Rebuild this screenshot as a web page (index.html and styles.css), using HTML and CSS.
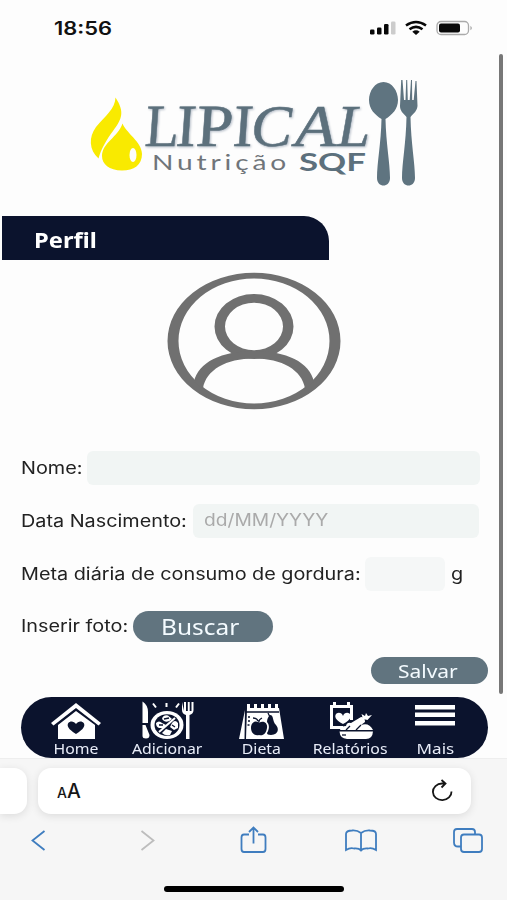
FILE: index.html
```html
<!DOCTYPE html>
<html lang="pt-BR">
<head>
<meta charset="utf-8">
<title>Lipical - Perfil</title>
<link rel="stylesheet" href="styles.css">
</head>
<body>
<div class="phone">
  <header class="status">
    <svg class="clock" viewBox="0 0 60 20"><text x="0" y="17" textLength="58" lengthAdjust="spacingAndGlyphs">18:56</text></svg>
    <svg class="signals" viewBox="0 0 104 16">
      <rect x="1" y="9.5" width="4.5" height="5" rx="1.3"/><rect x="8" y="7.5" width="4.5" height="7" rx="1.3"/><rect x="15" y="4" width="4.5" height="10.500" rx="1.300"/><rect class="dim" x="22" y="1.500" width="4.500" height="13" rx="1.300"/>
      <g class="wifi"><path d="M37 5.500Q47-1.500 57 5.500"/><path d="M40.500 9.300Q47 4.500 53.500 9.300"/></g>
      <path d="M43.300 11.700Q47 9 50.700 11.700L47 15Z"/>
      <rect class="battery" x="68" y="1.500" width="31.500" height="13" rx="4"/><rect x="70" y="3.500" width="21" height="9" rx="2"/><path class="cap" d="M101.500 5.700Q104 8 101.500 10.300Z"/>
    </svg>
  </header>

  <main class="page">
    <svg class="logo" viewBox="85 74 340 118" role="img" aria-label="Lipical Nutrição SQF">
      <path class="drop" d="M115.500 97.500C125 112 122 119 113 131C107 139 101 149 98.500 158.500C89 150 88.500 137 96 127C106 115 115 109 115.500 97.500Z"/>
      <path class="drop" d="M122.500 123.500C126 133 142 142 142 154C142 165 134 170.500 122 170.500C109 170.500 102 164 102 156C102 143 118 137 122.500 123.500Z"/>
      <ellipse class="glint" cx="133" cy="155" rx="3.500" ry="7"/>
      <g class="brand">
        <g transform="translate(0 146) skewX(-4)">
          <text x="144" y="0" textLength="34" lengthAdjust="spacingAndGlyphs">L</text>
          <text x="175" y="0">I</text>
          <text x="195" y="0" textLength="37" lengthAdjust="spacingAndGlyphs">P</text>
          <text x="232" y="0">I</text>
        </g>
        <g class="slanted"><text x="251" y="146" textLength="41" lengthAdjust="spacingAndGlyphs">C</text>
        <text x="295" y="146" textLength="41" lengthAdjust="spacingAndGlyphs">A</text>
        <text x="337" y="146" textLength="33" lengthAdjust="spacingAndGlyphs">L</text></g>
      </g>
      <text class="sub" x="152" y="170" textLength="138" lengthAdjust="spacingAndGlyphs">Nutrição</text>
      <text class="sqf" x="299" y="171" textLength="67" lengthAdjust="spacingAndGlyphs">SQF</text>
      <g class="cutlery">
        <path d="M383.500 82C392 82 398 91 398 100C398 109 392 115 385.500 119C386 143 390 163 390 178C390 188 377 188 377 178C377 163 381 143 381.500 119C375 115 369 109 369 100C369 91 375 82 383.500 82Z"/>
        <path d="M401.200 80L402.500 80L404 100L405.500 100L406.200 80H407.200L407.800 100H409.700L411 80H412L412.200 100H413.700L415.500 81H416.500L417.500 106C417 111 414 113 410.500 117C411 143 415 163 415 178C415 188 402 188 402 178C402 163 406 143 406.500 117C403 113 400 111 400 106Z"/>
      </g>
    </svg>

    <h1 class="title"><span class="stretch">Perfil</span></h1>

    <svg class="avatar" viewBox="166 272 176 139">
      <path fill-rule="evenodd" d="M167.500 341a86.500 68.300 0 1 0 173 0a86.500 68.300 0 1 0-173 0M178.500 341a75.500 62.500 0 1 0 151 0a75.500 62.500 0 1 0-151 0"/>
      <path fill-rule="evenodd" d="M214.500 326.500a39.500 32.500 0 1 0 79 0a39.500 32.500 0 1 0-79 0M225 326.500a29 23.700 0 1 0 58 0a29 23.700 0 1 0-58 0"/>
      <path d="M194 382C198 362 222 351 254 351S310 362 314 382L305 388.500C302 370 282 358.500 254 358.500S206 370 203 388.500Z"/>
    </svg>

    <form class="form">
      <div class="row name"><label for="nome"><span class="stretch">Nome:</span></label><input id="nome" type="text"></div>
      <div class="row birth"><label for="data"><span class="stretch">Data Nascimento:</span></label><div class="box"><span class="stretch">dd/MM/YYYY</span></div></div>
      <div class="row goal"><label for="meta"><span class="stretch">Meta diária de consumo de gordura:</span></label><input id="meta" type="text"><span class="unit"><span class="stretch">g</span></span></div>
      <div class="row photo"><label><span class="stretch">Inserir foto:</span></label><button type="button" class="pill search"><span class="stretch">Buscar</span></button></div>
      <button type="button" class="pill save"><span class="stretch">Salvar</span></button>
    </form>

    <nav class="tabs">
      <a><svg viewBox="0 0 52 40"><path d="M1 23L26 3L51 23L48.500 25.500L26 8L3.500 25.500Z"/><path fill-rule="evenodd" d="M8 25L26 11L45 25V39H8ZM26 34C18 29 17 26 18 23.500C20 20.500 24 21 26 24C28 21 32 20.500 34 23.500C35 26 34 29 26 34Z"/></svg><span class="stretch">Home</span></a>
      <a><svg viewBox="0 0 52 40"><path d="M1.500 1.500Q7 5 7 12V23H1.500ZM1.500 25H4.500L8.500 35Q8.500 38.500 5 38.500Q1.500 38.500 1.500 36Z"/><ellipse cx="26" cy="25" rx="16.500" ry="14"/><ellipse class="ink" cx="26" cy="25" rx="12.500" ry="10.800"/><path d="M21 19Q22 14.500 27 15.500L31 19Q27 23 23 21ZM15 23Q18 20 21 23L25 25L23 28L18 28Q15 27 15 23ZM31 23Q34 19 37 23V28L33 30L29 27ZM21 33L25 29L31 31L29 35Q24 36 21 33Z"/><path class="line" d="M18 32L34 18"/><path class="inkline" d="M23 19L28 18M18 25H22M31 25L34 27"/><path class="rays" d="M12 3.500L15 7.500M25.500 3V7M38 3.500L35 7.500"/><path d="M41 2V10Q41 14 45 15V39H48.500V15Q52.500 14 52.500 10V2H50.500V11H48.700V2H46.800V11H45V2H43V11Z"/></svg><span class="stretch">Adicionar</span></a>
      <a><svg viewBox="0 0 46 40"><path d="M7 10L6.500 39H1ZM9 8H41L46 39H8Z"/><path d="M9 4H12V9H9ZM16 4H19V9H16ZM23 4H26V9H23ZM30 4H33V9H30ZM37 4H40V9H37Z"/><path class="inkline" d="M8 12H41M10 17H12M10 21H12M9.500 25H11.500"/><path class="ink" d="M21 23C25 20 30 23 29 28C28 34 25 36 21 35C17 36 13 33 13 28C13 22 18 20 21 23ZM32 15C36 15 34 21 38 25C42 30 39 35 33 35C30 35 29 34 29 33C32 28 31 24 29 22C29 19 30 17 32 15Z"/><path class="inkline" d="M21 23Q20 20 24 18M15 18Q19 18 20 21M32 17L30 13"/></svg><span class="stretch">Dieta</span></a>
      <a><svg viewBox="0 0 46 40"><path class="frame" d="M16 27.500H4.500V6.500H24.500V20"/><path d="M6 2H9V8H6ZM20 2H23V8H20Z"/><path d="M16 24C8 20 7 16 9.500 13.500C12 12 15 13 16 16C17 13 20 12 22.500 13.500C25 16 24 20 16 24Z"/><path d="M13 30Q14 26 19 26Q20 22 24 23L34 17Q38 17 38 22L34 25Q42 22 46 30Z"/><path d="M36 19L34.500 14L38 16L39 13L41 16L45 15L40.500 20Z"/><path class="inkline" d="M19 30L23 26M29 30L34 25"/><path d="M12.500 31.500H46Q45.500 39 39 39H20Q13 38.500 12.500 31.500Z"/><path class="inkline" d="M15 35H19"/></svg><span class="stretch">Relatórios</span></a>
      <a><svg viewBox="0 0 40 40"><path d="M0 5H40V9.500H0ZM0 12.500H40V17H0ZM0 21H40V25.500H0Z"/></svg><span class="stretch more">Mais</span></a>
    </nav>
  </main>

  <footer class="browser">
    <div class="address">
      <div class="previous"></div>
      <div class="url"><span class="aa"><small>A</small>A</span>
        <svg class="reload" viewBox="0 0 24 24"><path d="M21.500 12.500A9.300 8.300 0 1 1 12 4.500H15M11.500 1L15.500 4.500L11.500 8.500"/></svg></div>
    </div>
    <div class="tools">
      <svg viewBox="0 0 32 32"><path d="M22.500 7L10.500 16.500L22.500 26"/></svg>
      <svg class="off" viewBox="0 0 32 32"><path d="M11.500 7L23.500 16.500L11.500 26"/></svg>
      <svg viewBox="0 0 32 32"><path d="M12 10.500H7Q4.500 10.500 4.500 13.500V25Q4.500 28 7 28H26Q28.500 28 28.500 25V13.500Q28.500 10.500 26 10.500H21M16.500 19.500V4M12 8L16.500 3.500L21 8"/></svg>
      <svg viewBox="0 0 32 32"><path d="M16 9Q12 6 7 6.500Q1 6.500 1 10V26Q5 23.500 9 24.500Q14 24 16 26.500Q18 24 23 24.500Q27 23.500 31 26V10Q31 6.500 25 6.500Q20 6 16 9ZM16 9V26"/></svg>
      <svg viewBox="0 0 32 32"><path d="M9 22.500H6Q2 22.500 2 18.500V8Q2 5 5 5H20Q23 5 23 8V10"/><rect x="9" y="10.500" width="21" height="17.500" rx="3"/></svg>
    </div>
    <div class="indicator"></div>
  </footer>
  <div class="scrollbar"></div>
</div>
</body>
</html>
```

FILE: styles.css
```css
* { box-sizing: border-box; }
body { margin: 0; background: #fdfdfd; font-family: Inter, "Liberation Sans", sans-serif; color: #222; }
.phone { position: relative; width: 507px; height: 900px; overflow: hidden; display: flex; flex-direction: column; }
svg { display: block; overflow: visible; }
.stretch { display: inline-block; white-space: nowrap; transform: scaleX(1.165); transform-origin: left center; }

.status { height: 54px; padding: 18px 34px 0 54px; display: flex; justify-content: space-between; }
.clock { width: 60px; height: 20px; font-size: 18px; font-weight: 600; fill: #111; }
.signals { width: 104px; height: 16px; margin-top: 2px; fill: #080808; }
.signals .dim { fill: #ccc; }
.wifi { fill: none; stroke: #080808; stroke-width: 2.6; }
.battery { fill: none; stroke: #aaa; stroke-width: 1.3; }
.cap { fill: #999; }

.page { height: 704px; }
.logo { width: 340px; height: 118px; margin: 20px 0 0 85px; }
.drop { fill: #f9ea00; }
.glint { fill: #fdfdfd; }
.brand { font: 60px "Liberation Serif", serif; fill: #5c707c; stroke: #5c707c; stroke-width: .5px; filter: drop-shadow(1px 1px 1px #b5bdc8); }
.slanted { font-style: italic; }
.sub { font: 22px Lato, sans-serif; letter-spacing: 3px; fill: #70757a; }
.sqf { font: 700 25px Lato, sans-serif; fill: #5c707c; }
.cutlery { fill: #5f7480; }

.title { margin: 24px 0 0 2px; width: 327px; height: 44px; padding-left: 32px; border-radius: 0 25px 0 0; background: #0b132d; color: #fff; font: 700 21px/49px "Noto Sans", sans-serif; }
.title .stretch { transform: scaleX(1.13); }
.avatar { width: 176px; height: 139px; margin: 12px 0 0 166px; fill: #707070; }

.form { padding: 40px 20px 0 21px; display: flex; flex-direction: column; height: 286px; }
.row { display: flex; align-items: center; height: 34px; flex: none; font-size: 17px; }
.row label { flex: none; margin-top: -1px; }
.row input, .box { border: 0; border-radius: 6px; background: #f1f5f4; height: 34px; min-width: 0; padding: 0; }
.name label { width: 66px; }
.name input { width: 393px; }
.birth { margin-top: 19px; }
.birth label { width: 172px; }
.box { width: 286px; padding-left: 11px; line-height: 33px; color: #aaa; }
.box .stretch { transform: scaleX(1.13); }
.goal { margin-top: 19px; }
.goal label { width: 344px; }
.goal input { width: 80px; background: #f5f7f7; }
.unit { margin-left: 6px; }
.photo { margin-top: 18px; }
.photo label { width: 112px; }
.pill { border: 0; padding: 0; background: #61747f; color: #f4fbff; font-family: "Noto Sans", sans-serif; text-align: left; }
.search { width: 140px; height: 31px; border-radius: 16px; padding-left: 28px; font-size: 21px; line-height: 30px; margin-top: 1px; }
.save { flex: none; align-self: flex-end; width: 117px; height: 27px; border-radius: 14px; padding-left: 27px; font-size: 18px; line-height: 26px; margin-top: 14px; margin-right: -1px; }

.tabs { margin-left: 21px; width: 467px; height: 61px; border-radius: 31px; background: #0b132d; padding-left: 9px; display: grid; grid-template-columns: 92px 90px 98px 80px 90px; color: #e8ecf8; font: 14px/16px "Noto Sans", sans-serif; }
.tabs a { display: flex; flex-direction: column; align-items: center; }
.tabs svg { height: 40px; width: 52px; margin-top: 3px; fill: #fff; }
.tabs .stretch { transform: scaleX(1.13); transform-origin: center; margin-top: 1px; }
.tabs .more { transform: scaleX(1.22); }
.tabs .ink { fill: #0b132d; }
.inkline, .line, .frame, .rays { fill: none; stroke: #0b132d; stroke-width: 1.3; }
.frame { stroke: #fff; stroke-width: 3; }
.line, .rays { stroke: #fff; stroke-width: 2; }

.browser { height: 142px; background: #f6f6f6; padding-top: 9px; border-top: 1px solid #eee; }
.address { display: flex; gap: 11px; }
.previous, .url { height: 46px; background: #fff; box-shadow: 0 2px 8px #0000001c; }
.previous { width: 27px; border-radius: 0 13px 13px 0; }
.url { width: 433px; border-radius: 13px; display: flex; justify-content: space-between; align-items: center; padding: 0 17px 0 19px; color: #151515; }
.aa { font-size: 19.5px; font-weight: 500; }
.aa small { font-size: 14px; }
.reload { width: 24px; height: 24px; fill: none; stroke: #151515; stroke-width: 1.8; }
.tools { display: flex; justify-content: space-between; padding: 10px 23px 0 22px; }
.tools svg { width: 32px; height: 32px; fill: none; stroke: #3f7dbf; stroke-width: 1.8; }
.tools .off { stroke: #bdbdbd; }
.indicator { width: 180px; height: 6px; border-radius: 3px; background: #000; margin: 30px 0 0 164px; }
.scrollbar { position: absolute; left: 499px; top: 54px; width: 4px; height: 640px; border-radius: 2px; background: #777; }
```
